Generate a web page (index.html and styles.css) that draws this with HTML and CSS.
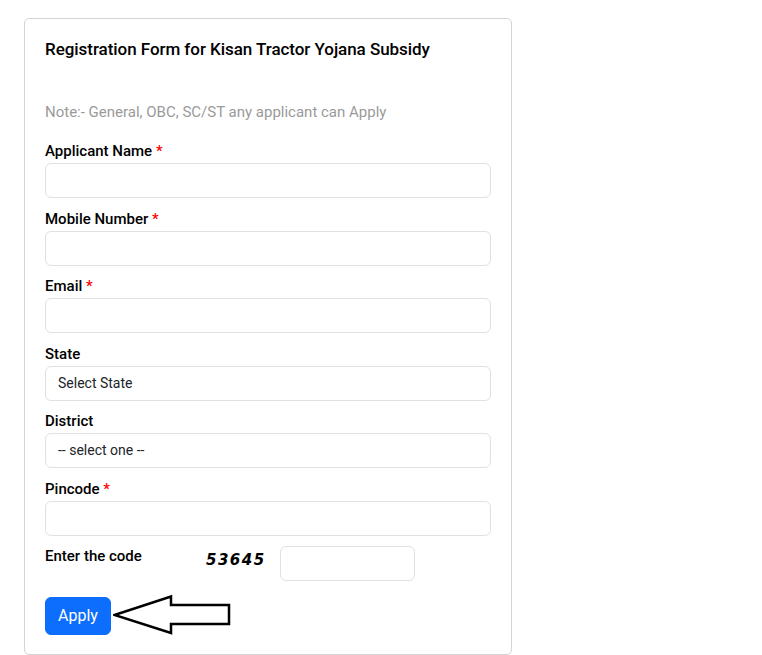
FILE: index.html
```html
<!DOCTYPE html>
<html lang="en">
<head>
<meta charset="utf-8">
<title>Registration Form</title>
<link rel="stylesheet" href="styles.css">
</head>
<body>
<div class="page">
  <form class="card">
    <h1 class="title">Registration Form for Kisan Tractor Yojana Subsidy</h1>
    <p class="note">Note:- General, OBC, SC/ST any applicant can Apply</p>

    <div class="group">
      <label class="label">Applicant Name <span class="req">*</span></label>
      <input class="control" type="text">
    </div>
    <div class="group">
      <label class="label">Mobile Number <span class="req">*</span></label>
      <input class="control" type="text">
    </div>
    <div class="group">
      <label class="label">Email <span class="req">*</span></label>
      <input class="control" type="text">
    </div>
    <div class="group">
      <label class="label">State</label>
      <div class="control select">Select State</div>
    </div>
    <div class="group">
      <label class="label">District</label>
      <div class="control select">-- select one --</div>
    </div>
    <div class="group">
      <label class="label">Pincode <span class="req">*</span></label>
      <input class="control" type="text">
    </div>

    <div class="captcha-row">
      <label class="label code-label">Enter the code</label>
      <span class="captcha">53645</span>
      <input class="control captcha-input" type="text">
    </div>

    <div class="actions">
      <button class="btn" type="button">Apply</button>
      <svg class="arrow" width="120" height="42" viewBox="0 0 120 42" aria-hidden="true">
        <polygon points="1.5,21 58,2.5 58,11 116,11 116,30 58,30 58,39 1.5,21" fill="#fff" stroke="#000" stroke-width="2.5" stroke-linejoin="miter"/>
      </svg>
    </div>
  </form>
</div>
</body>
</html>
```

FILE: styles.css
```css
* { box-sizing: border-box; }

body {
  margin: 0;
  background: #fff;
  font-family: Roboto, "Liberation Sans", Arial, sans-serif;
  color: #212529;
}

.page {
  padding: 18px 24px;
}

.card {
  width: 488px;
  border: 1px solid #d4d4d4;
  border-radius: 5px;
  padding: 17px 20px 18px 20px;
  display: flex;
  flex-direction: column;
}

.title {
  margin: 0;
  font-size: 17px;
  font-weight: 500;
  line-height: 26px;
  letter-spacing: -0.05px;
  color: #000;
}

.note {
  margin: 39px 0 17px 0;
  font-size: 15px;
  line-height: 22px;
  color: #9a9a9a;
}

.group {
  display: flex;
  flex-direction: column;
  margin-bottom: 9.5px;
}

.label {
  display: block;
  font-size: 15px;
  font-weight: 500;
  line-height: 22px;
  margin-bottom: 1px;
  color: #000;
}

.req {
  color: #ff0000;
}

.control {
  display: block;
  width: 100%;
  height: 35px;
  padding: 6px 12px;
  font-family: inherit;
  font-size: 14px;
  line-height: 21px;
  color: #212529;
  background: #fff;
  border: 1px solid #dee2e6;
  border-radius: 6px;
}

.select {
  color: #212529;
}

.captcha-row {
  display: flex;
  align-items: flex-start;
}

.code-label {
  width: 161px;
  flex: none;
}

.captcha {
  width: 74px;
  flex: none;
  margin-top: 4px;
  font-family: "DejaVu Sans", Verdana, sans-serif;
  font-style: italic;
  font-weight: bold;
  font-size: 15px;
  letter-spacing: 1.5px;
  line-height: 22px;
  color: #000;
}

.captcha-input {
  width: 135px;
  margin-top: 1px;
}

.actions {
  display: flex;
  align-items: center;
  margin-top: 15px;
}

.btn {
  height: 38px;
  padding: 6px 12px;
  font-family: inherit;
  font-size: 16px;
  line-height: 24px;
  color: #fff;
  background: #0d6efd;
  border: 1px solid #0d6efd;
  border-radius: 6px;
}

.arrow {
  display: block;
  margin-left: 2px;
  margin-top: -2px;
}
```
